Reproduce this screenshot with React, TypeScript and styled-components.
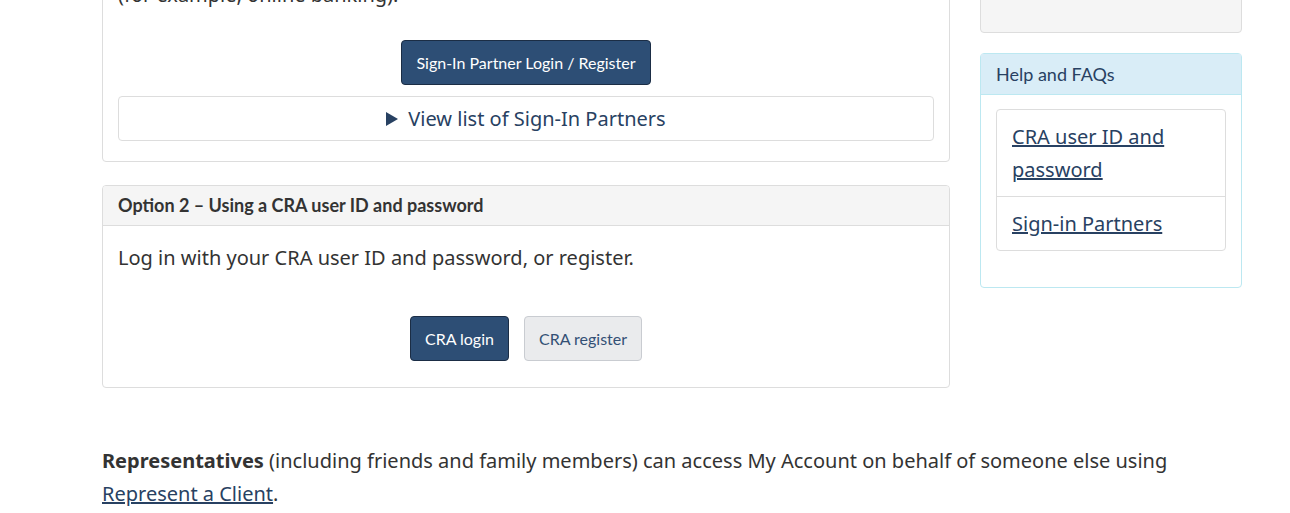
import React from "react";
import styled, { createGlobalStyle } from "styled-components";

const GlobalStyle = createGlobalStyle`
  html, body {
    margin: 0;
    padding: 0;
    background: #fff;
    overflow: hidden;
  }
  body {
    font-family: "Noto Sans", sans-serif;
    font-size: 20px;
    line-height: 33px;
    color: #333;
  }
`;

const Page = styled.div`
  margin-top: -78px;
  padding: 0 48px 0 102px;
`;

const Columns = styled.div`
  display: grid;
  grid-template-columns: 848px 262px;
  gap: 30px;
  align-items: start;
`;

const Main = styled.main`
  display: flex;
  flex-direction: column;
  gap: 23px;
`;

const Panel = styled.section`
  border: 1px solid #ddd;
  border-radius: 4px;
  background: #fff;
`;

const PanelHeading = styled.div`
  background: #f5f5f5;
  border-bottom: 1px solid #ddd;
  border-radius: 3px 3px 0 0;
  padding: 0 15px;
  height: 39px;
  display: flex;
  align-items: center;
  font-family: Lato, sans-serif;
  font-weight: 700;
  font-size: 18px;
  color: #333;
`;

const PanelBody = styled.div<{ $bottom?: number }>`
  padding: 15px 15px ${(p) => p.$bottom ?? 15}px;
`;

const Text = styled.p<{ $gap: number }>`
  margin: 0 0 ${(p) => p.$gap}px;
`;

const ButtonRow = styled.div`
  display: flex;
  justify-content: center;
  gap: 15px;
`;

const Button = styled.button<{ $primary?: boolean }>`
  height: 45px;
  padding: 0 14px;
  border-radius: 4px;
  font-family: Lato, sans-serif;
  font-size: 16px;
  cursor: pointer;
  border: 1px solid ${(p) => (p.$primary ? "#1b2d45" : "#c9ccd1")};
  background: ${(p) => (p.$primary ? "#2d4e75" : "#eaebed")};
  color: ${(p) => (p.$primary ? "#fff" : "#335075")};
`;

const Details = styled.div`
  margin-top: 11px;
  border: 1px solid #ddd;
  border-radius: 4px;
  height: 43px;
  display: flex;
  align-items: center;
  justify-content: center;
  gap: 10px;
  color: #284162;
  font-size: 20px;
`;

const Triangle = styled.span`
  width: 0;
  height: 0;
  border-left: 12px solid #284162;
  border-top: 7px solid transparent;
  border-bottom: 7px solid transparent;
`;

const Side = styled.aside`
  display: flex;
  flex-direction: column;
  gap: 20px;
`;

const GreyBox = styled.div`
  height: 109px;
  background: #f5f5f5;
  border: 1px solid #ddd;
  border-radius: 4px;
`;

const InfoPanel = styled.section`
  border: 1px solid #bce8f1;
  border-radius: 4px;
`;

const InfoHeading = styled.div`
  background: #d9edf7;
  border-bottom: 1px solid #bce8f1;
  height: 40px;
  padding: 0 15px;
  display: flex;
  align-items: center;
  font-family: Lato, sans-serif;
  font-size: 18px;
  color: #284162;
`;

const InfoBody = styled.div`
  padding: 14px 15px 36px;
`;

const List = styled.ul`
  list-style: none;
  margin: 0;
  padding: 0;
  border: 1px solid #ddd;
  border-radius: 4px;
`;

const Item = styled.li`
  padding: 10px 15px;
  & + & {
    border-top: 1px solid #ddd;
  }
`;

const A = styled.a`
  color: #284162;
  text-decoration: underline;
`;

const Footer = styled.p`
  margin: 56px 0 0;
`;

export default function App() {
  return (
    <>
      <GlobalStyle />
      <Page>
        <Columns>
          <Main>
            <Panel>
              <PanelHeading>Option 1 – Using a Sign-In Partner</PanelHeading>
              <PanelBody $bottom={20}>
                <Text $gap={29}>(for example, online banking).</Text>
                <ButtonRow>
                  <Button $primary>Sign-In Partner Login / Register</Button>
                </ButtonRow>
                <Details>
                  <Triangle />
                  View list of Sign-In Partners
                </Details>
              </PanelBody>
            </Panel>
            <Panel>
              <PanelHeading>Option 2 – Using a CRA user ID and password</PanelHeading>
              <PanelBody $bottom={26}>
                <Text $gap={42}>Log in with your CRA user ID and password, or register.</Text>
                <ButtonRow>
                  <Button $primary>CRA login</Button>
                  <Button>CRA register</Button>
                </ButtonRow>
              </PanelBody>
            </Panel>
          </Main>
          <Side>
            <GreyBox />
            <InfoPanel>
              <InfoHeading>Help and FAQs</InfoHeading>
              <InfoBody>
                <List>
                  <Item>
                    <A href="#">CRA user ID and password</A>
                  </Item>
                  <Item>
                    <A href="#">Sign-in Partners</A>
                  </Item>
                </List>
              </InfoBody>
            </InfoPanel>
          </Side>
        </Columns>
        <Footer>
          <strong>Representatives</strong> (including friends and family members) can access My
          Account on behalf of someone else using <A href="#">Represent a Client</A>.
        </Footer>
      </Page>
    </>
  );
}
